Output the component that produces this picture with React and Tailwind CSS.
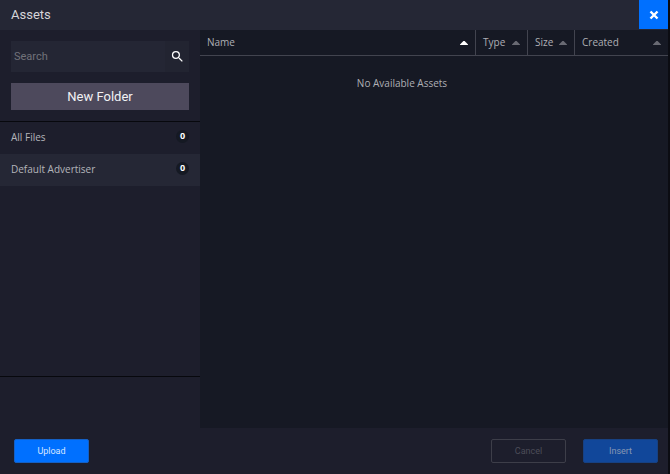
import { useState } from "react";
import { MdSearch } from "react-icons/md";

const folders = [
  { name: "All Files", count: 0 },
  { name: "Default Advertiser", count: 0 },
];

const columns = [
  { name: "Name", width: "w-auto" },
  { name: "Type", width: "w-[52px]" },
  { name: "Size", width: "w-[47px]" },
  { name: "Created", width: "w-[94px]" },
];

const SortArrow = ({ active }) => (
  <svg
    viewBox="0 0 8 4"
    className={`h-1 w-2 shrink-0 ${active ? "text-white" : "text-[#696a73]"}`}
    aria-hidden="true"
  >
    <path d="M3.4 0h1.2L8 3.4V4H0v-.6z" fill="currentColor" />
  </svg>
);

const Sidebar = ({ selected, onSelect }) => {
  const [search, setSearch] = useState("");

  return (
    <aside className="flex w-[200px] shrink-0 flex-col">
      <div className="px-[11px] pt-[11px] pb-[11px]">
        <form
          onSubmit={(e) => e.preventDefault()}
          className="flex h-[31px] bg-[#242634]"
        >
          <input
            type="text"
            aria-label="Search"
            placeholder="Search"
            value={search}
            onChange={(e) => setSearch(e.target.value)}
            className="min-w-0 flex-1 px-[3px] pt-0.5 font-['Roboto',sans-serif] text-[11px] text-[#c9c9ce] outline-none placeholder:text-[#71727a]"
          />
          <button
            type="submit"
            aria-label="Search files"
            className="flex w-6 items-center justify-center bg-[#222431] text-white"
          >
            <MdSearch className="size-[15px]" />
          </button>
        </form>

        <button
          type="button"
          className="mt-[11px] h-[27px] w-full bg-[#4d495c] font-['Roboto',sans-serif] text-[13px] text-[#f2f2f4]"
        >
          New Folder
        </button>
      </div>

      <ul className="flex-1 border-y border-[#07080d]">
        {folders.map((folder) => (
          <li key={folder.name}>
            <button
              type="button"
              onClick={() => onSelect(folder.name)}
              className={`flex h-8 w-full items-center justify-between px-[11px] pb-0.5 text-left text-[10px] text-[#b4b5ba] ${
                selected === folder.name ? "bg-[#252735]" : ""
              }`}
            >
              {folder.name}
              <span className="mb-0.5 flex size-[13px] items-center justify-center rounded-full bg-[#151923] text-[9px] font-bold text-white">
                {folder.count}
              </span>
            </button>
          </li>
        ))}
      </ul>
      <div className="h-[51px]"></div>
    </aside>
  );
};

const AssetTable = () => {
  const [sortBy, setSortBy] = useState("Name");

  return (
    <main className="min-w-0 flex-1 bg-[#161924]">
      <table className="w-full table-fixed border-separate border-spacing-0 text-[#aeafb5]">
        <thead>
          <tr>
            {columns.map((column) => (
              <th
                key={column.name}
                className={`border-b border-l border-[#42444f] p-0 font-normal first:border-l-0 ${column.width}`}
              >
                <button
                  type="button"
                  onClick={() => setSortBy(column.name)}
                  className="flex h-[25px] w-full items-center justify-between px-[7px] text-[10px]"
                >
                  {column.name}
                  <SortArrow active={sortBy === column.name} />
                </button>
              </th>
            ))}
          </tr>
        </thead>
        <tbody>
          <tr>
            <td
              colSpan={columns.length}
              className="pt-[19px] pr-16 text-center text-[10px] leading-4"
            >
              No Available Assets
            </td>
          </tr>
        </tbody>
      </table>
    </main>
  );
};

const App = () => {
  const [selected, setSelected] = useState("Default Advertiser");

  return (
    <div className="flex min-h-screen flex-col border-r-2 border-[#0b0c12] bg-[#1d1e2c] font-['Open_Sans',sans-serif]">
      <header className="flex h-[30px] items-start justify-between bg-[#252735]">
        <h1 className="pl-[11px] font-['Roboto',sans-serif] text-[13px] leading-[29px] text-[#d5d5d9]">
          Assets
        </h1>
        <button
          type="button"
          aria-label="Close"
          className="flex h-[29px] w-[29px] items-center justify-center bg-[#0070ff] text-white"
        >
          <svg viewBox="0 0 10 10" className="size-2.5" aria-hidden="true">
            <path
              d="M1.5 1.5 8.5 8.5M8.5 1.5 1.5 8.5"
              stroke="currentColor"
              strokeWidth="2.4"
            />
          </svg>
        </button>
      </header>

      <div className="flex flex-1">
        <Sidebar selected={selected} onSelect={setSelected} />
        <AssetTable />
      </div>

      <footer className="flex h-[46px] items-center gap-[17px] pr-[10px] pl-[14px] font-['Roboto',sans-serif] text-[9px]">
        <button
          type="button"
          className="mr-auto h-6 w-[75px] rounded-xs border border-[#1560c4] bg-[#0070ff] pt-0.5 text-[#d5e6ff]"
        >
          Upload
        </button>
        <button
          type="button"
          className="h-6 w-[75px] rounded-xs border border-[#3d3e49] pt-0.5 text-[#4c4d58]"
        >
          Cancel
        </button>
        <button
          type="button"
          disabled
          className="h-6 w-[75px] rounded-xs border border-[#174182] bg-[#11479a] pt-0.5 text-[#8797b4]"
        >
          Insert
        </button>
      </footer>
    </div>
  );
};

export default App;
